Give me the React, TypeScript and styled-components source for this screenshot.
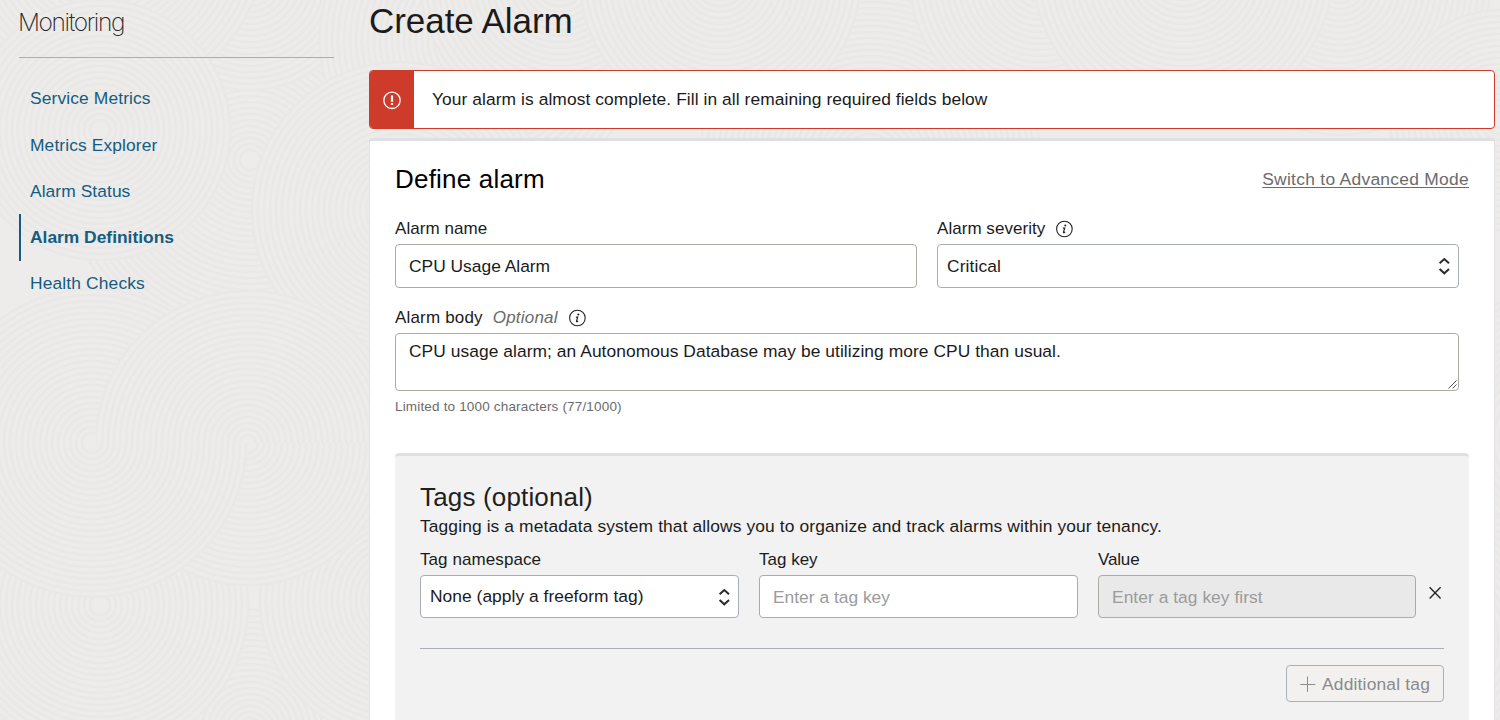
import React from 'react';
import styled, { createGlobalStyle, css } from 'styled-components';

const GlobalStyle = createGlobalStyle`
  *, *::before, *::after { box-sizing: border-box; }
  html, body { margin: 0; padding: 0; }
  body {
    background: #edeceb;
    color: #1b1b1b;
    font-family: "Liberation Sans", Arial, sans-serif;
    font-size: 17.4px;
    line-height: 21px;
    overflow: hidden;
  }
`;

type Tracked = { $track?: number };
const tracking = css<Tracked>`
  letter-spacing: ${({ $track = 0 }) => $track}px;
`;

const Page = styled.div`
  position: relative;
  display: flex;
  width: 1500px;
  height: 720px;
  overflow: hidden;
`;

const Texture = styled.svg`
  position: absolute;
  inset: 0;
  width: 1500px;
  height: 720px;
`;

const Sidebar = styled.aside`
  position: relative;
  flex: none;
  width: 315px;
  margin-left: 19px;
`;

const SidebarTitle = styled.h2`
  margin: 0;
  height: 58px;
  padding-top: 7px;
  border-bottom: 1px solid #a9adb1;
  color: #262626;
  font: 200 24.5px/31px Inter, sans-serif;
  letter-spacing: -1.38px;
  text-indent: -1px;
`;

const Nav = styled.nav`
  display: flex;
  flex-direction: column;
  padding-top: 17.75px;
`;

const NavItem = styled.a<Tracked & { $active?: boolean }>`
  ${tracking}
  display: flex;
  align-items: center;
  height: 46.2px;
  padding-left: 9px;
  border-left: 2px solid ${({ $active }) => ($active ? '#145c80' : 'transparent')};
  color: #145c80;
  font-weight: ${({ $active }) => ($active ? 700 : 400)};
`;

const Main = styled.main`
  position: relative;
  flex: none;
  width: 1126px;
  margin-left: 35px;
`;

const PageTitle = styled.h1`
  margin: 0 0 29px;
  font-size: 35px;
  font-weight: 400;
  line-height: 41px;
  letter-spacing: -0.05px;
`;

const Banner = styled.div`
  display: flex;
  height: 59px;
  border: 1px solid #cf3b2a;
  border-radius: 4px;
  background: #fff;
  overflow: hidden;
`;

const BannerIcon = styled.div`
  display: flex;
  align-items: center;
  justify-content: center;
  width: 44px;
  padding-top: 1px;
  background: #cf3b2a;
`;

const BannerText = styled.p<Tracked>`
  ${tracking}
  margin: 0;
  padding: 18px 0 0 18px;
`;

const Card = styled.section`
  height: 640px;
  margin-top: 9px;
  padding: 22px 25px 0;
  border: 1px solid #e0e1e5;
  border-top: 3px solid #dfe0e4;
  border-radius: 4px 4px 0 0;
  background: #fff;
`;

const CardHeader = styled.header`
  display: flex;
  justify-content: space-between;
  align-items: center;
  height: 32px;
`;

const SectionTitle = styled.h2<Tracked & { $dark?: boolean }>`
  ${tracking}
  margin: 0;
  color: ${({ $dark }) => ($dark ? '#000' : '#1f1f1f')};
  font-size: 26px;
  font-weight: 400;
  line-height: 32px;
`;

const ModeLink = styled.a<Tracked>`
  ${tracking}
  color: #6b6b6b;
  text-decoration: underline;
  text-decoration-thickness: 1px;
  text-underline-offset: 2px;
`;

const FieldRow = styled.div`
  display: grid;
  grid-template-columns: 522px 522px;
  gap: 20px;
  margin-top: 23px;
`;

const BodyField = styled.div`
  width: 1064px;
  margin-top: 19px;
`;

const Field = styled.div`
  min-width: 0;
`;

const Label = styled.label<Tracked>`
  ${tracking}
  display: flex;
  align-items: center;
  height: 21px;
  margin-bottom: 5px;
  font-size: 17px;
  white-space: nowrap;
`;

const Optional = styled.em<Tracked>`
  ${tracking}
  margin-left: 10px;
  color: #6b6b6b;
`;

const InfoSvg = styled.svg`
  flex: none;
  margin: 1px 0 0 10px;
`;

const Control = styled.div<Tracked & { $short?: boolean; $kind?: 'input' | 'select' }>`
  ${tracking}
  display: flex;
  align-items: center;
  justify-content: space-between;
  height: ${({ $short }) => ($short ? 43 : 44)}px;
  padding: 0 8px 0 ${({ $kind }) => ($kind === 'select' ? 9 : 13)}px;
  border: 1px solid ${({ $kind }) => ($kind === 'select' ? '#a7acb5' : '#aeaba5')};
  border-radius: 4px;
  background: #fff;
  white-space: nowrap;
`;

const PlaceholderControl = styled(Control)<{ $disabled?: boolean }>`
  padding-top: 1px;
  background: ${({ $disabled }) => ($disabled ? '#e9e9e9' : '#fff')};
  color: #9b9b9b;
`;

const TextArea = styled(Control)`
  align-items: flex-start;
  height: 58px;
  padding: 7px 1px 1px 13px;
`;

const ResizeGrip = styled.svg`
  align-self: flex-end;
`;

const Hint = styled.p`
  margin: 7px 0 0;
  color: #6b6b6b;
  font-size: 13.5px;
  line-height: 17px;
  letter-spacing: 0.17px;
`;

const TagsPanel = styled.section`
  height: 320px;
  margin-top: 38px;
  padding: 25px 25px 0;
  border-top: 3px solid #dfe0e4;
  border-radius: 4px 4px 0 0;
  background: #f2f2f2;
`;

const TagsText = styled.p<Tracked>`
  ${tracking}
  margin: 3px 0 12px;
  white-space: nowrap;
`;

const TagRow = styled.div`
  display: grid;
  grid-template-columns: 319px 319px 318px 12px;
  column-gap: 20px;
  padding-bottom: 30px;
  border-bottom: 1px solid #a9adb5;
`;

const RemoveButton = styled.button`
  align-self: start;
  width: 14px;
  height: 14px;
  margin: 37px 0 0 -8px;
  padding: 0;
  border: 0;
  background: none;
  line-height: 0;
`;

const TagActions = styled.div`
  display: flex;
  justify-content: flex-end;
  padding-top: 16px;
`;

const AddButton = styled.button<Tracked>`
  ${tracking}
  display: flex;
  align-items: center;
  gap: 6px;
  width: 158px;
  height: 37px;
  padding: 1px 0 0 13px;
  border: 1px solid #a9b0b9;
  border-radius: 4px;
  background: #f3f1f0;
  color: #8a8a8a;
  font: 17.4px/21px "Liberation Sans", Arial, sans-serif;
  white-space: nowrap;
`;

/* Raked-sand swirl: a disc filled with evenly spaced rings. */
const Swirl = ({ cx, cy, r }: { cx: number; cy: number; r: number }) => (
  <g>
    <circle cx={cx} cy={cy} r={r} fill="#edeceb" />
    {Array.from({ length: Math.floor(r / 6) }, (_, i) => (
      <circle key={i} cx={cx} cy={cy} r={r - i * 6} fill="none" stroke="#e9e8e7" strokeWidth="2.4" />
    ))}
  </g>
);

const SandTexture = () => (
  <Texture viewBox="0 0 1500 720" aria-hidden="true">
    <defs>
      <clipPath id="upper"><rect x="96" y="280" width="320" height="163" /></clipPath>
    </defs>
    <Swirl cx={20} cy={-40} r={190} />
    <Swirl cx={250} cy={160} r={190} />
    <Swirl cx={250} cy={-20} r={110} />
    <Swirl cx={105} cy={-60} r={160} />
    <Swirl cx={480} cy={40} r={160} />
    <Swirl cx={560} cy={-20} r={140} />
    <Swirl cx={870} cy={160} r={170} />
    <Swirl cx={720} cy={-20} r={140} />
    <Swirl cx={1040} cy={-20} r={130} />
    <Swirl cx={1340} cy={-15} r={150} />
    <Swirl cx={1183} cy={-30} r={150} />
    <Swirl cx={1500} cy={120} r={110} />
    <Swirl cx={1560} cy={440} r={150} />
    <Swirl cx={1430} cy={640} r={140} />
    <Swirl cx={400} cy={210} r={148} />
    <Swirl cx={100} cy={130} r={130} />
    <Swirl cx={250} cy={730} r={120} />
    <Swirl cx={-60} cy={610} r={145} />
    <Swirl cx={100} cy={605} r={148} />
    <Swirl cx={400} cy={600} r={140} />
    <Swirl cx={248} cy={443} r={142} />
    <Swirl cx={92} cy={443} r={154} />
    <g clipPath="url(#upper)"><Swirl cx={248} cy={443} r={152} /></g>
  </Texture>
);

const InfoIcon = () => (
  <InfoSvg width="18" height="18" viewBox="0 0 18 18" fill="none" stroke="#222">
    <circle cx="9.4" cy="9" r="7.8" strokeWidth="1.1" />
    <circle cx="10.3" cy="5.5" r="1" fill="#222" stroke="none" />
    <path d="M7.9 8.1h1.8L8.5 12.1q-.1.9.8.5l.9-.7" strokeWidth="1.2" />
  </InfoSvg>
);

const Arrows = () => (
  <svg width="12" height="20" viewBox="0 0 12 20" fill="none" stroke="#2b2b2b" strokeWidth="2">
    <path d="M1.6 7.2 6.3 3l4.7 4.2M1.6 13.1l4.7 4.2 4.7-4.2" />
  </svg>
);

const NAV = [
  { label: 'Service Metrics', track: 0.12 },
  { label: 'Metrics Explorer', track: 0.11 },
  { label: 'Alarm Status', track: 0.07 },
  { label: 'Alarm Definitions', track: 0, active: true },
  { label: 'Health Checks', track: 0.14 },
];

export default function App() {
  return (
    <>
      <GlobalStyle />
      <Page>
        <SandTexture />
        <Sidebar>
          <SidebarTitle>Monitoring</SidebarTitle>
          <Nav>
            {NAV.map((item) => (
              <NavItem key={item.label} $track={item.track} $active={item.active}>{item.label}</NavItem>
            ))}
          </Nav>
        </Sidebar>
        <Main>
          <PageTitle>Create Alarm</PageTitle>
          <Banner>
            <BannerIcon>
              <svg width="20" height="20" viewBox="0 0 20 20" fill="none" stroke="#fff">
                <circle cx="10" cy="10.3" r="8.2" strokeWidth="1.3" />
                <path d="M10 5.5v6.2M10 13v2.1" strokeWidth="2.2" />
              </svg>
            </BannerIcon>
            <BannerText $track={0.07}>
              Your alarm is almost complete. Fill in all remaining required fields below
            </BannerText>
          </Banner>
          <Card>
            <CardHeader>
              <SectionTitle $dark $track={0.2}>Define alarm</SectionTitle>
              <ModeLink $track={0.29}>Switch to Advanced Mode</ModeLink>
            </CardHeader>
            <FieldRow>
              <Field>
                <Label $track={0.05}>Alarm name</Label>
                <Control>CPU Usage Alarm</Control>
              </Field>
              <Field>
                <Label $track={0.04}>Alarm severity<InfoIcon /></Label>
                <Control $kind="select" $track={0.1}>Critical<Arrows /></Control>
              </Field>
            </FieldRow>
            <BodyField>
              <Label $track={0.18}>
                Alarm body<Optional $track={0.2}>Optional</Optional><InfoIcon />
              </Label>
              <TextArea $track={0.055}>
                CPU usage alarm; an Autonomous Database may be utilizing more CPU than usual.
                <ResizeGrip width="9" height="9" viewBox="0 0 9 9" stroke="#555" strokeWidth="1">
                  <path d="M.5 8.5l8-8M4.5 8.5l4-4" />
                </ResizeGrip>
              </TextArea>
              <Hint>Limited to 1000 characters (77/1000)</Hint>
            </BodyField>
            <TagsPanel>
              <SectionTitle $track={0.16}>Tags (optional)</SectionTitle>
              <TagsText $track={0.112}>
                Tagging is a metadata system that allows you to organize and track alarms within your tenancy.
              </TagsText>
              <TagRow>
                <Field>
                  <Label $track={0.08}>Tag namespace</Label>
                  <Control $short $kind="select" $track={0.03}>None (apply a freeform tag)<Arrows /></Control>
                </Field>
                <Field>
                  <Label>Tag key</Label>
                  <PlaceholderControl $short>Enter a tag key</PlaceholderControl>
                </Field>
                <Field>
                  <Label $track={-0.15}>Value</Label>
                  <PlaceholderControl $short $disabled $track={0.04}>Enter a tag key first</PlaceholderControl>
                </Field>
                <RemoveButton aria-label="Remove tag">
                  <svg width="14" height="14" viewBox="0 0 14 14" fill="none" stroke="#222" strokeWidth="1.3">
                    <path d="M1.6 1.3l11 11.2M12.6 1.3l-11 11.2" />
                  </svg>
                </RemoveButton>
              </TagRow>
              <TagActions>
                <AddButton $track={0.19}>
                  <svg width="16" height="16" viewBox="0 0 16 16" fill="none" stroke="#8a8a8a" strokeWidth="1">
                    <path d="M.3 8.5h15M7.5.5v15.3" />
                  </svg>
                  Additional tag
                </AddButton>
              </TagActions>
            </TagsPanel>
          </Card>
        </Main>
      </Page>
    </>
  );
}
